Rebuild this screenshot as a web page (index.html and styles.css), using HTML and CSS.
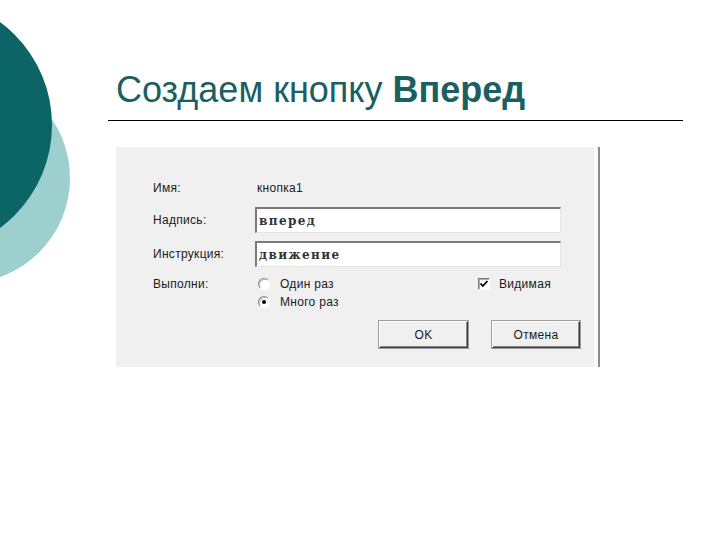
FILE: index.html
```html
<!DOCTYPE html>
<html lang="ru">
<head>
<meta charset="utf-8">
<title>Создаем кнопку Вперед</title>
<link rel="stylesheet" href="styles.css">
</head>
<body>
<div class="slide">
  <div class="deco">
    <div class="circle light"></div>
    <div class="circle dark"></div>
  </div>
  <h1 class="title">Создаем кнопку <b>Вперед</b></h1>
  <div class="rule"></div>
  <div class="dialog">
    <div class="row row-name">
      <span class="label">Имя:</span>
      <span class="value">кнопка1</span>
    </div>
    <div class="row row-input">
      <span class="label">Надпись:</span>
      <div class="input">вперед</div>
    </div>
    <div class="row row-input row-second">
      <span class="label">Инструкция:</span>
      <div class="input">движение</div>
    </div>
    <div class="row row-run">
      <span class="label">Выполни:</span>
      <div class="options">
        <div class="radios">
          <div class="opt"><span class="radio"></span><span>Один раз</span></div>
          <div class="opt"><span class="radio checked"></span><span>Много раз</span></div>
        </div>
        <div class="opt check-opt">
          <span class="checkbox"><svg width="10" height="10" viewBox="0 0 10 10"><polyline points="1.5,4.5 3.8,7 8.5,2" fill="none" stroke="#000" stroke-width="1.8"/></svg></span>
          <span>Видимая</span>
        </div>
      </div>
    </div>
    <div class="buttons">
      <div class="btn ok">OK</div>
      <div class="btn cancel">Отмена</div>
    </div>
  </div>
</div>
</body>
</html>
```
FILE: styles.css
```css
html, body {
  margin: 0;
  padding: 0;
  background: #fff;
}
.slide {
  position: relative;
  width: 720px;
  height: 540px;
  overflow: hidden;
  background: #fff;
}
.deco {
  position: absolute;
  left: 0;
  top: 0;
  width: 0;
  height: 0;
}
.circle {
  position: absolute;
  border-radius: 50%;
}
.circle.dark {
  left: -204px;
  top: -3px;
  width: 256px;
  height: 256px;
  background: #0b6565;
}
.circle.light {
  left: -140px;
  top: 73px;
  width: 210px;
  height: 210px;
  background: #9dcfcf;
}
.title {
  margin: 0;
  padding: 68px 0 0 116px;
  height: 44px;
  font-family: "Liberation Sans", Arial, sans-serif;
  font-weight: normal;
  font-size: 36px;
  line-height: 44px;
  color: #1a5f61;
  white-space: nowrap;
}
.title b {
  font-weight: bold;
}
.rule {
  margin: 8px 0 0 108px;
  width: 575px;
  height: 0;
  border-top: 1px solid #000;
}
.dialog {
  margin: 26px 0 0 116px;
  width: 484px;
  height: 220px;
  box-sizing: border-box;
  background: #f0f0f0;
  border-right: 2px solid #8a8a8a;
  box-shadow: inset -4px 0 0 #fafafa;
  padding-top: 32px;
  font-family: "Liberation Sans", Arial, sans-serif;
  font-size: 12px;
  letter-spacing: 0.3px;
  color: #1a1a1a;
}
.row {
  display: flex;
  align-items: center;
  padding-left: 37px;
}
.label {
  width: 102px;
  flex: none;
}
.row-name {
  height: 18px;
}
.row-name .value {
  padding-left: 2px;
}
.row-input {
  height: 26px;
  margin-top: 10px;
}
.row-second {
  margin-top: 8px;
}
.input {
  width: 306px;
  height: 26px;
  box-sizing: border-box;
  background: #fff;
  border-top: 2px solid #7a7a7a;
  border-left: 2px solid #7a7a7a;
  border-right: 1px solid #e4e4e4;
  border-bottom: 1px solid #e4e4e4;
  padding: 3px 0 0 2px;
  font-family: "DejaVu Serif", "Liberation Serif", serif;
  font-size: 12px;
  font-weight: bold;
  letter-spacing: 1.4px;
  line-height: 19px;
  color: #333;
}
.row-run {
  align-items: flex-start;
  margin-top: 8px;
}
.row-run .label {
  line-height: 18px;
}
.options {
  display: flex;
}
.radios {
  width: 223px;
  display: flex;
  flex-direction: column;
}
.opt {
  display: flex;
  align-items: center;
  height: 18px;
  gap: 10px;
}
.radios .opt {
  padding-left: 3px;
}
.radio {
  width: 12px;
  height: 12px;
  box-sizing: border-box;
  border-radius: 50%;
  background: #fff;
  border: 1px solid;
  border-color: #8a8a8a #ffffff #ffffff #8a8a8a;
  box-shadow: inset 1px 1px 0 #c8c8c8;
  position: relative;
}
.radio.checked::after {
  content: "";
  position: absolute;
  left: 3px;
  top: 3px;
  width: 4px;
  height: 4px;
  border-radius: 50%;
  background: #000;
}
.check-opt {
  gap: 9px;
}
.checkbox {
  width: 12px;
  height: 12px;
  box-sizing: border-box;
  background: #fff;
  border: 1px solid;
  border-color: #7a7a7a #ffffff #ffffff #7a7a7a;
  box-shadow: inset 1px 1px 0 #b0b0b0;
  display: flex;
  align-items: center;
  justify-content: center;
}
.checkbox svg {
  display: block;
}
.buttons {
  display: flex;
  gap: 24px;
  padding-left: 263px;
  margin-top: 10px;
}
.btn {
  height: 27px;
  box-sizing: border-box;
  display: flex;
  align-items: center;
  justify-content: center;
  background: #f0f0f0;
  border: 1px solid;
  border-color: #ffffff #3a3a3a #3a3a3a #ffffff;
  box-shadow: inset -1px -1px 0 #8a8a8a, 0 0 0 1px #a0a0a0;
}
.btn.ok {
  width: 89px;
}
.btn.cancel {
  width: 88px;
}
```
